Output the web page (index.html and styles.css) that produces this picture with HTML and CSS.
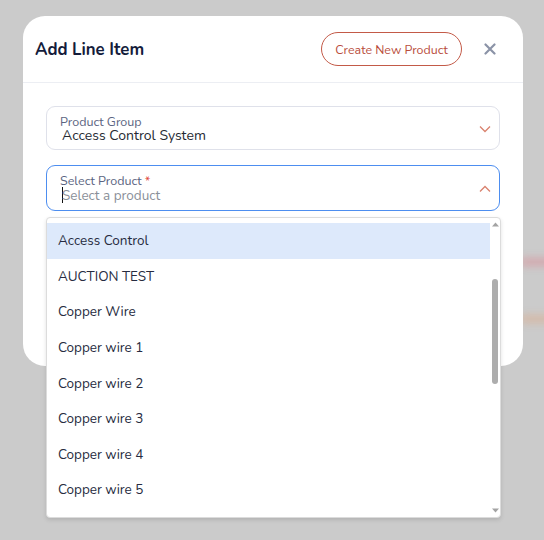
FILE: index.html
```html
<!DOCTYPE html>
<html>
<head>
<meta charset="utf-8">
<link rel="stylesheet" href="styles.css">
</head>
<body>
<div class="backdrop">
  <span class="blur blur-red"></span>
  <span class="blur blur-orange"></span>
</div>
<div class="modal">
  <div class="modal-header">
    <h1 class="title">Add Line Item</h1>
    <div class="header-actions">
      <button class="btn-outline">Create New Product</button>
      <span class="close">
        <svg width="12" height="12" viewBox="0 0 12 12"><path d="M1.5 1.5L10.5 10.5M10.5 1.5L1.5 10.5" stroke="#8b93a7" stroke-width="2.2" stroke-linecap="round"/></svg>
      </span>
    </div>
  </div>
  <div class="modal-body">
    <div class="field">
      <div class="field-text">
        <div class="field-label">Product Group</div>
        <div class="field-value">Access Control System</div>
      </div>
      <svg class="chev" width="12" height="8" viewBox="0 0 12 8"><path d="M1 1.5L6 6.5L11 1.5" fill="none" stroke="#d9826e" stroke-width="1.3"/></svg>
    </div>
    <div class="field field-active">
      <div class="field-text">
        <div class="field-label">Select Product <span class="req">*</span></div>
        <div class="field-placeholder"><span class="caret"></span>Select a product</div>
      </div>
      <svg class="chev" width="12" height="8" viewBox="0 0 12 8"><path d="M1 6.5L6 1.5L11 6.5" fill="none" stroke="#d9826e" stroke-width="1.3"/></svg>
    </div>
  </div>
</div>
<div class="dropdown">
  <ul class="options">
    <li class="option option-hover">Access Control</li>
    <li class="option">AUCTION TEST</li>
    <li class="option">Copper Wire</li>
    <li class="option">Copper wire 1</li>
    <li class="option">Copper wire 2</li>
    <li class="option">Copper wire 3</li>
    <li class="option">Copper wire 4</li>
    <li class="option">Copper wire 5</li>
  </ul>
  <div class="scrollbar">
    <svg class="arrow" width="7" height="5" viewBox="0 0 7 5"><path d="M0 4.5L3.5 0.5L7 4.5Z" fill="#a3a3a3"/></svg>
    <div class="track"><div class="thumb"></div></div>
    <svg class="arrow" width="7" height="5" viewBox="0 0 7 5"><path d="M0 0.5L3.5 4.5L7 0.5Z" fill="#a3a3a3"/></svg>
  </div>
</div>
</body>
</html>
```

FILE: styles.css
```css
* { box-sizing: border-box; }
html, body { margin: 0; padding: 0; }
body {
  width: 544px;
  height: 540px;
  background: #cbcbcb;
  font-family: "Nunito", "Lato", "Noto Sans", sans-serif;
  overflow: hidden;
  position: relative;
  padding: 16px 0 0 23px;
}
.backdrop { position: absolute; inset: 0; }
.blur {
  position: absolute;
  left: 520px;
  width: 40px;
  height: 6px;
  filter: blur(4px);
}
.blur-red { top: 259px; background: #d79aa2; }
.blur-orange { top: 316px; background: #d9b39a; }

.modal {
  position: relative;
  width: 500px;
  height: 350px;
  background: #fff;
  border-radius: 22px;
}
.modal-header {
  height: 67px;
  border-bottom: 1px solid #eceef3;
  display: flex;
  align-items: center;
  justify-content: space-between;
  padding: 0 27px 0 12px;
}
.title {
  margin: 0;
  font-size: 16.8px;
  font-weight: 700;
  color: #141c3b;
}
.header-actions { display: flex; align-items: center; gap: 22px; }
.btn-outline {
  font-family: inherit;
  height: 34px;
  width: 141px;
  padding: 0;
  border: 1px solid #c35a48;
  border-radius: 17px;
  background: #fff;
  color: #b94d3c;
  font-size: 12.4px;
}
.close { display: flex; width: 12px; height: 12px; }

.modal-body {
  padding: 23px 23px 0 23px;
  display: flex;
  flex-direction: column;
  gap: 15px;
}
.field {
  height: 44px;
  border: 1px solid #dfe1ea;
  border-radius: 9px;
  display: flex;
  align-items: center;
  justify-content: space-between;
  padding: 0 8px 0 13px;
}
.field-active {
  height: 46px;
  border: 1.5px solid #4d8ef0;
}
.field-text { display: flex; flex-direction: column; padding-top: 1px; }
.field-label {
  font-size: 12.5px;
  color: #5b6481;
  line-height: 13px;
}
.req { color: #e0443a; }
.field-value {
  font-size: 14px;
  color: #262a33;
  line-height: 15px;
  padding-left: 2px;
}
.field-placeholder {
  font-size: 13.5px;
  color: #8a8f99;
  line-height: 15px;
  padding-left: 2px;
  display: flex;
  align-items: center;
}
.caret {
  width: 1px;
  height: 16px;
  background: #111;
  margin-right: -1px;
}
.chev { margin-top: 2px; }

.dropdown {
  position: absolute;
  left: 46px;
  top: 217px;
  width: 455px;
  height: 301px;
  background: #fff;
  border: 1px solid #dcdcdc;
  border-radius: 4px;
  box-shadow: 0 2px 4px rgba(0,0,0,0.12);
  display: flex;
}
.options {
  list-style: none;
  margin: 0;
  padding: 5px 0 0 0;
  flex: 1;
}
.option {
  height: 35.6px;
  display: flex;
  align-items: center;
  padding-left: 11px;
  font-size: 13.5px;
  color: #262b40;
}
.option-hover { background: #dde9fb; }
.scrollbar {
  width: 10px;
  display: flex;
  flex-direction: column;
  align-items: center;
  padding: 4px 0 4px 0;
}
.arrow { flex: none; }
.track { flex: 1; width: 100%; display: flex; justify-content: center; padding-top: 52px; }
.thumb {
  width: 6px;
  height: 105px;
  background: #adadad;
  border-radius: 3px;
}
```
